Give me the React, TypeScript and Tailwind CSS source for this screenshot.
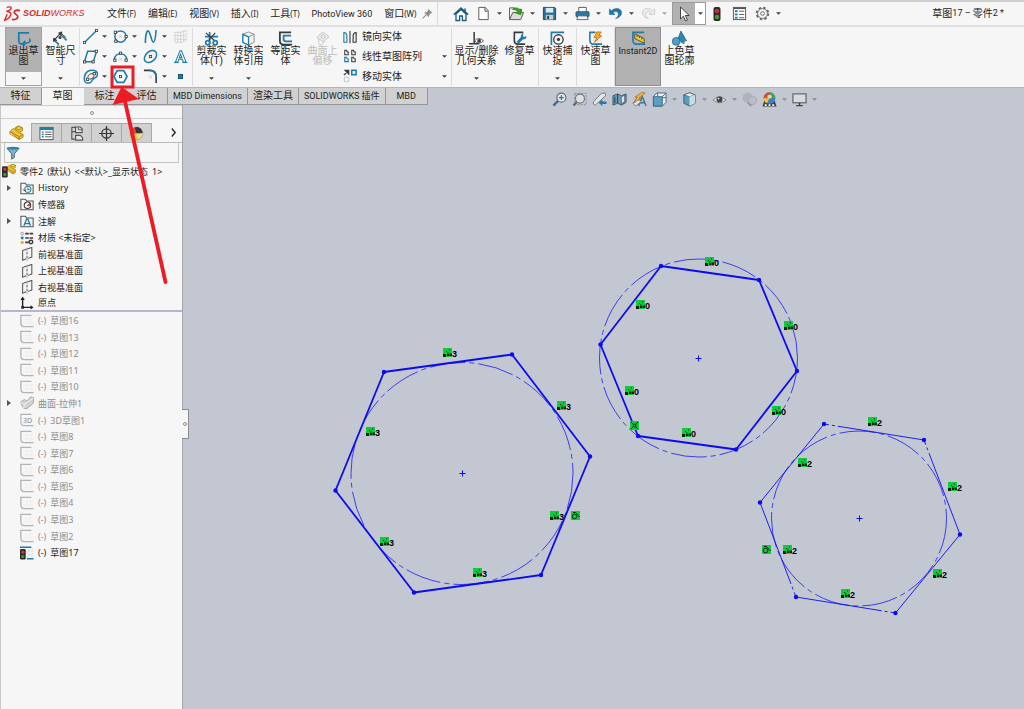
import { Fragment, type ReactNode } from "react";
import clsx from "clsx";

const BLUE = "#1f7ca8";
const DARK = "#3a3a3a";

function Icon({ children, className = "size-4" }: { children: ReactNode; className?: string }) {
  return (
    <svg viewBox="0 0 16 16" fill="none" aria-hidden="true" className={clsx("shrink-0", className)}>
      {children}
    </svg>
  );
}

function Caret({ className = "text-neutral-700" }: { className?: string }) {
  return (
    <svg viewBox="0 0 6 3" aria-hidden="true" className={clsx("h-[3px] w-[5px] shrink-0", className)}>
      <path d="M0 0h6L3 3z" fill="currentColor" />
    </svg>
  );
}

// small square handle used on sketch entity icons
function Node({ x, y }: { x: number; y: number }) {
  return <rect x={x - 1.2} y={y - 1.2} width="2.4" height="2.4" fill="#fff" stroke={DARK} strokeWidth="0.9" />;
}

const partShape = (
  <g stroke="#9a7408" strokeWidth="0.8" strokeLinejoin="round">
    <path d="M1 7 4.5 3.5 7 5V2.5L10 1l4.5 2v3L11 8l4 2v3l-4 2.5z" fill="#f3c12c" />
    <path d="m1 7 10 5.5 4-2.5M11 12.5v3M7 5l4 3M1 7v2.5l10 6" />
    <ellipse cx="10.5" cy="3.3" rx="2.6" ry="1.5" fill="#fbe07c" />
  </g>
);

const quickIcons = {
  home: (
    <>
      <path d="M3 8v6.5h3.6V10h2.8v4.5H13V8L8 3.5z" fill="#fff" stroke="#1c5b7c" strokeWidth="1.3" />
      <path d="M1 8.7 8 2.2l7 6.5" stroke="#1c5b7c" strokeWidth="1.8" />
      <path d="M12 2.5v3" stroke="#1c5b7c" strokeWidth="1.5" />
    </>
  ),
  file: (
    <>
      <path d="M3 1.5h7L13 5v9.5H3z" fill="#fff" stroke="#555" />
      <path d="M9.5 1.5v4H13" fill="#ddd" stroke="#555" />
    </>
  ),
  open: (
    <>
      <path d="M.5 14.5V2h5L7 3.5h6v4" fill="#efefef" stroke="#555" />
      <path d="M.7 14.5 4 7h11.5l-3 7.5z" fill="#ddd" stroke="#555" />
      <path d="M4 3c3-2 6-1.5 7.5 1.5l2-1-1 6L7 7.5l2-1.3C8 4.5 6.5 3.5 4 4z" fill="#35a51c" stroke="#20740f" strokeWidth="0.5" />
    </>
  ),
  save: (
    <>
      <path d="M1.5 1.5h12l1 1v12h-13z" fill="#2c6f92" stroke="#184a66" />
      <rect x="4" y="2" width="8" height="5" fill="#dbe9f0" />
      <rect x="4" y="9.5" width="8" height="5" fill="#c8ccd0" />
      <rect x="5.5" y="10.5" width="2" height="3.5" fill="#184a66" />
    </>
  ),
  print: (
    <>
      <path d="M4 6V1.5h8V6" fill="#fff" stroke="#555" />
      <rect x="1" y="6" width="14" height="5.5" rx="1" fill="#2c789f" stroke="#184a66" strokeWidth="0.8" />
      <path d="M3 10.5h10l1 4H2z" fill="#f2f2f2" stroke="#444" strokeWidth="0.8" />
    </>
  ),
  undo: (
    <path d="M1.5 3v6h6L5.3 7C8 5 11.5 6 11 9.5c-.3 1.8-1.5 2.8-3 4 4-1 6.5-3.2 6.5-6.5C14.3 2.5 8 1 3.6 5z" fill="#1f77a3" stroke="#155676" strokeWidth="0.5" />
  ),
  redo: (
    <path d="M14.5 3v6h-6l2.2-2C8 5 4.5 6 5 9.5c.3 1.8 1.5 2.8 3 4-4-1-6.5-3.2-6.5-6.5C1.7 2.5 8 1 12.4 5z" fill="#ececec" stroke="#c3c3c3" strokeWidth="0.8" />
  ),
  options: (
    <>
      <rect x="1.5" y="1.5" width="13" height="13" fill="#fff" stroke="#555" />
      <path d="M1.5 2.5h13" stroke="#555" strokeWidth="1.5" />
      {[4.5, 8, 11.5].map((y) => (
        <Fragment key={y}>
          <rect x="3" y={y} width="3" height="2" fill={BLUE} />
          <path d={`M7.5 ${y + 1}H13`} stroke="#555" />
        </Fragment>
      ))}
    </>
  ),
  gear: (
    <>
      <circle cx="8" cy="8" r="6.2" stroke="#666" strokeWidth="2" strokeDasharray="2.6 2.27" />
      <circle cx="8" cy="8" r="5.2" fill="#f6f6f6" stroke="#666" />
      <circle cx="8" cy="8" r="2" stroke="#666" />
    </>
  ),
};

const quickTools = [
  { label: "新建", icon: quickIcons.file },
  { label: "打开", icon: quickIcons.open },
  { label: "保存", icon: quickIcons.save },
  { label: "打印", icon: quickIcons.print },
  { label: "撤消", icon: quickIcons.undo },
  { label: "重做", icon: quickIcons.redo, disabled: true },
];

const menus = [
  ["文件", "(F)"],
  ["编辑", "(E)"],
  ["视图", "(V)"],
  ["插入", "(I)"],
  ["工具", "(T)"],
  ["", "PhotoView 360"],
  ["窗口", "(W)"],
];

function IconButton({ label, children, className }: { label: string; children: ReactNode; className?: string }) {
  return (
    <button type="button" aria-label={label} className={clsx("flex items-center justify-center", className)}>
      {children}
    </button>
  );
}

function MenuBar() {
  return (
    <header className="flex h-[27px] items-stretch border-t-2 border-b-2 border-t-[#cfcfcf] border-b-[#e0e0e0]">
      <div className="flex w-[438px] shrink-0 items-center border-r border-[#dadada] pl-1">
        <svg viewBox="0 0 16 16" className="size-[17px] shrink-0" fill="none" stroke="#da2c2c" strokeWidth="1.3" aria-hidden="true">
          <path d="M2.5 2.2c2.5-.8 4.8-.6 4.2 1C6.2 4.5 4 5.5 2 6" />
          <path d="M3 6.4c2.6 0 4 .8 3.2 3C5.3 12 3 13.6.6 14.4L3 8.6" />
          <path d="M15 5.2c-2.2-.6-5.5-.2-5.3 1.8.1 1.6 3.7 2.3 3.3 4.3-.4 2-3.2 2.7-5.6 2.3" strokeWidth="1.7" />
        </svg>
        <div className="ml-0.5 w-[84px] shrink-0 font-['Liberation_Sans',sans-serif] text-[9px] whitespace-nowrap text-[#da2c2c] italic">
          <b>SOLID</b>
          WORKS
        </div>
        <nav className="flex gap-3 text-[10px] whitespace-nowrap">
          {menus.map(([name, key]) => (
            <button key={key} type="button">
              {name}
              <span className={clsx(name ? "font-['Noto_Sans',sans-serif] text-[8px]" : "text-[9px]")}>{key}</span>
            </button>
          ))}
        </nav>
        <IconButton label="固定菜单" className="mr-1 ml-auto">
          <Icon className="size-[11px]">
            <path d="m9 1 6 6-2 .5-2.5 2.5-.5 3.5L3 6.5 6.5 6 9 3.5z" fill="#8c8c8c" />
            <path d="m1 15 5-5" stroke="#8c8c8c" strokeWidth="1.5" />
          </Icon>
        </IconButton>
      </div>
      <div className="ml-3 flex items-stretch">
        <IconButton label="主页" className="w-[22px]">
          <Icon>{quickIcons.home}</Icon>
        </IconButton>
        {quickTools.map((tool) => (
          <button key={tool.label} type="button" aria-label={tool.label} disabled={tool.disabled} className="flex items-center">
            <span className="flex w-[22px] justify-center">
              <Icon className="size-[15px]">{tool.icon}</Icon>
            </span>
            <span className="flex w-[11px] justify-center">
              <Caret className={tool.disabled ? "text-neutral-400" : "text-neutral-700"} />
            </span>
          </button>
        ))}
        <button type="button" aria-label="选择" className="ml-0.5 flex border border-[#9b9b9b]">
          <span className="flex w-[22px] items-center justify-center self-stretch bg-[#b1b1b1]">
            <Icon>
              <path d="M4.5 1v12l2.9-2.8 2.1 4.7 1.9-.9-2.1-4.5h3.900z" fill="#fff" stroke="#333" strokeWidth="0.9" />
            </Icon>
          </span>
          <span className="flex w-[10px] items-center justify-center self-stretch bg-white">
            <Caret />
          </span>
        </button>
        <IconButton label="重建模型" className="w-[22px]">
          <Icon>
            <rect x="4.5" y="1" width="7" height="14" rx="2" fill="#2b2b2b" />
            <circle cx="8" cy="5" r="2.3" fill="#c8312c" />
            <circle cx="8" cy="11" r="2.3" fill="#3f9c35" />
          </Icon>
        </IconButton>
        <IconButton label="文件属性" className="w-[22px]">
          <Icon className="size-[15px]">{quickIcons.options}</Icon>
        </IconButton>
        <IconButton label="选项" className="w-[35px] gap-1.5">
          <Icon className="size-[15px]">{quickIcons.gear}</Icon>
          <Caret />
        </IconButton>
      </div>
      <h1 className="ml-auto flex items-center pr-5 text-[10px]">
        草图<span className="text-[9px] whitespace-pre">17 – </span>零件<span className="text-[9px] whitespace-pre">2 *</span>
      </h1>
    </header>
  );
}

const ribbonIcons = {
  exit: (
    <>
      <path d="M14 2H3v8q0 4 4 4h2" stroke={BLUE} strokeWidth="1.8" />
      <path d="M14 7v3q0 2-4 2V9.5L6 13l4 3v-2.5q6 0 6-4z" fill={BLUE} />
    </>
  ),
  dimension: (
    <>
      <path d="m1.5 9.5 6.5-7" stroke={DARK} strokeWidth="1.3" />
      <path d="m0 11 1-3.5 3 2.5zM9.5 1 6 2l2.5 3zM8 2l6 5" fill={DARK} stroke={DARK} />
      <path d="m2 10.5 4.5 4M8.5 4l6 6" stroke={BLUE} strokeWidth="1.8" />
      <circle cx="7.5" cy="7" r="1.6" fill={DARK} />
    </>
  ),
  trim: (
    <>
      <path d="M6 1v13M1 6h14" stroke={BLUE} strokeWidth="1.8" />
      <path d="m2 2 10 9M12 2 5 10" stroke={DARK} strokeWidth="1.3" />
      <circle cx="4" cy="12.5" r="2.2" stroke={BLUE} strokeWidth="1.8" />
      <circle cx="12" cy="12.5" r="2.2" stroke={BLUE} strokeWidth="1.8" />
    </>
  ),
  convert: (
    <>
      <path d="m8 1 6 2.5V12l-6 3-6-3V3.5z" fill="#f3f3f3" stroke="#8b8b8b" />
      <path d="m2 3.5 6 2.8 6-2.8" stroke="#8b8b8b" />
      <path d="M8 6.3V15l-6-3V3.5z" fill="#fff" stroke={BLUE} strokeWidth="1.4" />
    </>
  ),
  offset: (
    <>
      <path d="M14 1.5H2V10q0 4.5 4 4.5h9" stroke={DARK} strokeWidth="1.9" />
      <path d="M14 5H6v3.5Q6 11 8.5 11H15" stroke={BLUE} strokeWidth="1.9" />
    </>
  ),
  surface: (
    <>
      <path d="m8 1 7 5-6 5.5L2 7z" fill="#ededed" stroke="#c4c4c4" />
      <path d="M4 8v5q0 2 3 2l3-4" stroke="#c4c4c4" />
      <circle cx="8.5" cy="6" r="2" stroke="#c4c4c4" />
    </>
  ),
  relations: (
    <>
      <path d="M5.5 1v12M0 13.5h11" stroke={DARK} strokeWidth="1.6" />
      <path d="M6 10.5q4-5 9.5 0-5 5-9.5 0z" fill="#fff" stroke="#555" />
      <circle cx="10.8" cy="10.5" r="2" fill={DARK} />
    </>
  ),
  repair: (
    <>
      <path d="M12 1.5H2.5v9Q2.5 14 6 14h8" stroke={DARK} strokeWidth="1.7" />
      <path d="m5 11.500 4.500-5Q9 3 12.500 2.500l-1 2.500L13 6.500l2.500-1Q15.500 9 11.500 9L7 13.500z" fill={BLUE} />
    </>
  ),
  snap: (
    <>
      <path d="M1.5 15V1.5H15" stroke={BLUE} strokeWidth="1.8" />
      <circle cx="9" cy="9" r="5" stroke={DARK} strokeWidth="1.4" />
      <circle cx="9" cy="9" r="1.7" fill={DARK} />
    </>
  ),
  rapid: (
    <>
      <path d="M5 6h9M5 10h9M6 4v9M10 6v7M14 6v8" stroke="#ddd" strokeWidth="0.8" />
      <path d="M8 1.5H2v8Q2 14 6 14h9" stroke={BLUE} strokeWidth="1.7" />
      <path d="m9.5 1-3 6h3L7 12l7.500-7h-3L14 1z" fill="#f8b21f" stroke="#c05b10" strokeWidth="0.8" />
    </>
  ),
  instant: (
    <>
      <path d="M14 1.5H2v8Q2 14 6 14h9" stroke={BLUE} strokeWidth="1.7" />
      <path d="m4 3 10 5v5L4 8z" fill="#f3cc31" stroke="#333" strokeWidth="0.8" />
      <path d="M6.500 4.500v2M9 5.500v2M11.500 7v2" stroke="#333" strokeWidth="0.9" />
    </>
  ),
  shaded: (
    <>
      <path d="m9.5 0 6 10.500h-10z" fill="#2b86b2" stroke="#17587a" strokeWidth="0.7" />
      <circle cx="4.5" cy="11" r="4.2" fill="#4d9fc5" stroke="#17587a" strokeWidth="0.7" />
      <path d="m10 7 4 2-1 5-4-2z" fill="#3585aa" />
    </>
  ),
};

function RibbonButton({ icon, label, caret, wide, disabled }: { icon: ReactNode; label: string; caret?: boolean; wide?: boolean; disabled?: boolean }) {
  return (
    <button
      type="button"
      disabled={disabled}
      className={clsx("flex h-[58px] flex-col items-center pt-1", wide ? "w-[49px]" : "w-[37px]", disabled && "text-[#bdbdbd]")}
    >
      <Icon className="size-[15px]">{icon}</Icon>
      <span className={clsx("text-[10px] leading-[10px]", wide ? "w-[46px]" : "w-8")}>{label}</span>
      {caret && (
        <span className="mt-auto flex h-[14px] items-center">
          <Caret />
        </span>
      )}
    </button>
  );
}

const entityTools: { label: string; caret?: boolean; icon: ReactNode }[] = [
  { label: "直线", caret: true, icon: <><path d="m1.5 14.5 13-13" stroke={BLUE} strokeWidth="1.6" /><Node x={1.5} y={14.5} /><Node x={14.5} y={1.5} /></> },
  { label: "圆", caret: true, icon: <><circle cx="8" cy="8" r="6" stroke={BLUE} strokeWidth="1.6" /><Node x={2.5} y={3.5} /><Node x={14} y={8} /><Node x={3} y={13} /><path d="m6.5 6.5 3 3m0-3-3 3" stroke="#bbb" strokeWidth="0.8" /></> },
  { label: "样条曲线", caret: true, icon: <path d="M2.5 15c0-7 1-13 3-13s3.500 12 5.500 12 2.500-6 3-13" stroke={BLUE} strokeWidth="1.7" /> },
  { label: "基准面", icon: <path d="M2 3.5h6v11H2zM8 3.5l6-2v11l-6 2M2 7h12M2 11h12M5 3v11M11 2v11" stroke="#c9c9c9" strokeDasharray="2 1" /> },
  { label: "平行四边形", caret: true, icon: <><path d="M5 2.5h9.500l-3.500 11H1.500z" stroke={BLUE} strokeWidth="1.6" /><Node x={1.7} y={13.7} /><Node x={14.2} y={2.5} /><Node x={10.8} y={13.7} /></> },
  { label: "圆弧", caret: true, icon: <><path d="M1.5 11C2 3 14 3 14.5 11" stroke={BLUE} strokeWidth="1.6" /><Node x={2} y={12} /><Node x={14} y={12} /><Node x={8} y={4.5} /><path d="m6.5 9.500 3 3m0-3-3 3" stroke="#bbb" strokeWidth="0.8" /></> },
  { label: "椭圆", caret: true, icon: <><ellipse cx="8" cy="8" rx="7.5" ry="5.2" transform="rotate(-42 8 8)" stroke={BLUE} strokeWidth="1.6" /><Node x={8} y={8} /></> },
  { label: "文字", icon: <><path d="m2.500 14 5-12H9l5 12h-3l-1.200-3.200H6.200L5 14zM6.800 9h2.600L8 5.500z" fill="#fff" stroke={BLUE} strokeWidth="1.1" /><path d="M1 14.500h5m4 0h5.500" stroke={BLUE} /></> },
  { label: "槽口", caret: true, icon: <><path d="M1.5 9C2 3 7 .5 12 1.5s4 7 .5 8-2 5-6 5.500S1 13 1.500 9z" stroke={BLUE} strokeWidth="1.6" /><Node x={5} y={11} /><Node x={12} y={5} /><path d="M5 9q1-4.500 5.500-4M7 11q4 0 5-4" stroke={DARK} /></> },
  { label: "多边形", icon: <><path d="M4.5 1.8h7L15 8l-3.500 6.200h-7L1 8z" fill="#fff" stroke={BLUE} strokeWidth="1.8" /><Node x={8} y={8} /></> },
  { label: "绘制圆角", caret: true, icon: <><path d="M1 1.5h6q7 0 7 7V15" stroke={DARK} strokeWidth="1.7" /><path d="M7 1.5q7 0 7 7" stroke={BLUE} strokeWidth="1.7" /><path d="m6.500 7 3 3m0-3-3 3" stroke="#bbb" strokeWidth="0.8" /></> },
  { label: "点", icon: <rect x="5.8" y="5.8" width="4.4" height="4.4" fill={BLUE} stroke="#174f6c" /> },
];

const transforms = [
  {
    label: "镜向实体",
    icon: (
      <>
        <path d="M1 3v11h3.500V9.500q-1-1 0-2Q4.500 3 1 3z" stroke={BLUE} strokeWidth="1.3" />
        <path d="M15 3v11h-3.500V9.500q1-1 0-2Q11.500 3 15 3z" stroke={DARK} strokeWidth="1.3" />
        <path d="M8 1v14" stroke={DARK} strokeWidth="1.3" />
      </>
    ),
  },
  {
    label: "线性草图阵列",
    caret: true,
    icon: (
      <>
        <path d="M2 1.5h2q0 2 2 2v3H2zM10 1.5h2q0 2 2 2v3h-4zM10 9.500h2q0 2 2 2v3h-4z" stroke={DARK} strokeWidth="1.2" />
        <path d="M2 9.500h2q0 2 2 2v3H2z" stroke={BLUE} strokeWidth="1.3" />
      </>
    ),
  },
  {
    label: "移动实体",
    caret: true,
    icon: (
      <>
        <path d="m1 7 4-4M2.5 1.5h4v4z" stroke={DARK} strokeWidth="1.5" fill={DARK} />
        <rect x="10" y="1.5" width="5" height="5" stroke={BLUE} strokeWidth="1.8" />
        <rect x="1.5" y="9.5" width="5" height="5" stroke="#aaa" strokeDasharray="1.5 1" />
      </>
    ),
  },
];

function Separator() {
  return <div className="my-px w-px shrink-0 self-stretch bg-[#dcdcdc]" />;
}

function Ribbon() {
  return (
    <div className="flex h-[61px] items-start border-b border-[#b5b5b5] pl-[5px]">
      <button type="button" aria-pressed="true" className="flex h-[59px] w-[37px] flex-col items-center border border-[#a3a3a3] bg-[#f6f6f6] text-[10px] leading-[10px]">
        <span className="flex w-full flex-1 flex-col items-center bg-[#b1b1b1] pt-[3px]">
          <Icon className="size-[15px]">{ribbonIcons.exit}</Icon>
          <span className="w-8">退出草图</span>
        </span>
        <span className="flex h-[13px] items-center">
          <Caret />
        </span>
      </button>
      <RibbonButton icon={ribbonIcons.dimension} label="智能尺寸" caret />
      <Separator />
      <div className="grid h-[59px] w-[112px] shrink-0 grid-cols-[30px_30px_30px_22px] grid-rows-3">
        {entityTools.map((tool) => (
          <button key={tool.label} type="button" aria-label={tool.label} className="flex items-center gap-1 pl-[3px]">
            <Icon className="size-[15px]">{tool.icon}</Icon>
            {tool.caret && <Caret />}
          </button>
        ))}
      </div>
      <Separator />
      <RibbonButton icon={ribbonIcons.trim} label="剪裁实体(T)" caret />
      <RibbonButton icon={ribbonIcons.convert} label="转换实体引用" caret />
      <RibbonButton icon={ribbonIcons.offset} label="等距实体" />
      <RibbonButton icon={ribbonIcons.surface} label="曲面上偏移" disabled />
      <div className="grid h-[59px] w-[110px] shrink-0 grid-rows-3 text-[10px]">
        {transforms.map((tool) => (
          <button key={tool.label} type="button" className="flex items-center gap-[5px] pl-0.5 whitespace-nowrap">
            <Icon className="size-[14px]">{tool.icon}</Icon>
            {tool.label}
            {tool.caret && (
              <span className="mr-1 ml-auto">
                <Caret />
              </span>
            )}
          </button>
        ))}
      </div>
      <Separator />
      <RibbonButton icon={ribbonIcons.relations} label="显示/删除几何关系" caret wide />
      <RibbonButton icon={ribbonIcons.repair} label="修复草图" />
      <Separator />
      <RibbonButton icon={ribbonIcons.snap} label="快速捕捉" caret />
      <Separator />
      <RibbonButton icon={ribbonIcons.rapid} label="快速草图" />
      <Separator />
      <button type="button" aria-pressed="true" className="flex h-[59px] w-[46px] flex-col items-center border border-[#8f8f8f] bg-[#b1b1b1] pt-[3px] text-[9px] leading-[11px]">
        <Icon className="size-[15px]">{ribbonIcons.instant}</Icon>
        Instant2D
      </button>
      <RibbonButton icon={ribbonIcons.shaded} label="上色草图轮廓" />
    </div>
  );
}

const tabs = ["特征", "草图", "标注", "评估", "MBD Dimensions", "渲染工具", "SOLIDWORKS 插件", "MBD"];

const viewTools: { label: string; caret?: boolean; icon: ReactNode }[] = [
  { label: "整屏显示全图", icon: <><path d="m7.500 8.500-6 6" stroke="#3d6f8c" strokeWidth="2.6" /><circle cx="10" cy="6" r="4.8" fill="#dfe9ee" stroke="#666" strokeWidth="1.2" /><path d="M7.500 6h5M10 3.500v5" stroke={BLUE} strokeWidth="1.3" /></> },
  { label: "局部放大", icon: <><path d="M3 1.500h12v12H3z" stroke="#888" strokeDasharray="2 1.5" /><path d="m6 9.500-4.500 5" stroke="#666" strokeWidth="2.3" /><circle cx="8.500" cy="7" r="4.8" fill="#dbe2e7" stroke="#777" strokeWidth="1.2" /></> },
  { label: "上一视图", icon: <><path d="m14 1-4 .5-8.500 9q-1 3 2 3.500L14.500 4z" fill="#e3e6e8" stroke="#777" /><path d="m7 11.500 4-3.500v2.200h4.500v2.600H11V15z" fill={BLUE} /></> },
  { label: "剖面视图", icon: <><path d="m1 4 5-2 4 2 5-2v9l-5 3-4-2-5 2z" fill="#6a9db8" stroke="#3f5663" /><path d="M6 2v10M3 5v7" stroke="#31495a" strokeWidth="1.2" /><path d="m10 5 3.500-1.500v7l-3.500 2z" fill="#dbe5ea" stroke="#3f5663" strokeWidth="0.7" /></> },
  { label: "动态注解视图", icon: <><path d="m7 15 4-10 4 10M8.500 11.500h5" stroke="#3b7796" strokeWidth="1.5" /><path d="m1 12 4-5 5 3-6 5z" fill="#dce5ea" stroke="#5c6f7b" strokeWidth="0.8" /><path d="M11 0 3 5.500h3L1.500 12 10 6.500H7.500L14 1z" fill="#f6b13d" stroke="#9a6220" strokeWidth="0.7" /></> },
  { label: "视图定向", caret: true, icon: <><path d="M1.500 5 5 1h10v10l-4 4H1.500z" fill="#eaf1f5" stroke="#496778" /><path d="M11 5l4-4M6 1v4M15 6h-4" stroke="#496778" /><path d="M1.500 5H11v10H1.500z" fill="#5a9fc2" stroke="#3c6c85" /></> },
  { label: "显示样式", caret: true, icon: <><path d="m8 1 6 2v9l-6 3-6-3V3z" fill="#5a9fc2" stroke="#3c5b6c" /><path d="m2 3 6 2 6-2-6-2z" fill="#f0f5f8" stroke="#3c5b6c" strokeWidth="0.7" /><path d="m8 5 6-2v9l-6 3z" fill="#cbdbe4" /></> },
  { label: "隐藏所有类型", caret: true, icon: <><path d="M1 8.500q7-7 14 0-7 6-14 0z" fill="#d9dbe0" stroke="#888" /><circle cx="8" cy="8" r="3.2" fill="#444" /><circle cx="7" cy="7" r="1" fill="#ddd" /></> },
  { label: "编辑外观", icon: <><circle cx="6" cy="6" r="5.5" fill="#afb3bc" /><circle cx="11" cy="9" r="4.5" fill="#b9bdc6" stroke="#a3a8b1" /><path d="m6 11 4 4" stroke="#9398a3" strokeWidth="2" /></> },
  { label: "应用布景", caret: true, icon: <><path d="m2.500 9-2 6.500h15l-2-6.500z" fill="#3f434b" /><path d="M3 13h2v2H3zm4 0h2v2H7zm4 0h2v2h-2z" fill="#fff" /><circle cx="8" cy="6.500" r="6.300" fill="#3f7fc4" /><path d="M8 .2a6.300 6.300 0 0 0-6.300 6.300L8 7z" fill="#dd4634" /><path d="M8 .2a6.300 6.300 0 0 1 6.300 6.300L8 7z" fill="#42a84d" /><path d="M1.700 6.500q0 4 3.500 5.500L8 7z" fill="#f0c53a" /><ellipse cx="8" cy="5" rx="2.400" ry="2" fill="#fff" opacity=".7" /></> },
  { label: "视图设定", caret: true, icon: <><rect x="1" y="2" width="14" height="9.5" fill="#d7dade" stroke="#666" strokeWidth="1.3" /><path d="M8 11.500V14m-3.500.5h7" stroke="#444" strokeWidth="1.5" /></> },
];

function TabBar() {
  return (
    <div className="relative z-10 flex h-[17px] items-start">
      <div role="tablist" className="flex h-full">
        {tabs.map((tab) => {
          const active = tab === "草图";
          return (
            <button
              key={tab}
              type="button"
              role="tab"
              aria-selected={active}
              className={clsx(
                "flex min-w-[42px] items-center justify-center border-r border-b px-[5px] leading-none whitespace-nowrap",
                active ? "border-[#f6f6f6] bg-[#f6f6f6]" : "border-[#969696] bg-[#d1d1d1]",
                /[A-Z]/.test(tab) ? "text-[9px]" : "text-[10px]",
              )}
            >
              {tab}
            </button>
          );
        })}
      </div>
      <div className="ml-[122px] flex pt-1">
        {viewTools.map((tool) => (
          <button key={tool.label} type="button" aria-label={tool.label} className="flex items-center">
            <span className="flex w-5 justify-center">
              <Icon className="size-[15px]">{tool.icon}</Icon>
            </span>
            {tool.caret && (
              <span className="flex w-[10px] justify-center">
                <Caret className="text-[#868b96]" />
              </span>
            )}
          </button>
        ))}
      </div>
    </div>
  );
}

const folder = <path d="M1 14.500v-12h5l1.500 2H15v10z" fill="#f6f6f6" stroke="#555" strokeWidth="1.2" />;

const planeIcon = (
  <>
    <path d="M7 2.500 3 4v11l4-1.500M9 2l4.500-1.500v11L9 13" stroke="#555" strokeWidth="1.2" />
    <path d="M8 1v14.500" stroke="#555" strokeWidth="1.1" strokeDasharray="3 1.5" />
  </>
);

const sketchIcon = (
  <>
    <path d="M5 6h10M5 10h10M8 4v9M12 4v9" stroke="#ececec" strokeWidth="0.8" />
    <path d="M13 1.500H1V10q0 4.500 4 4.500h10.500" stroke="#b3b3b3" strokeWidth="1.5" />
  </>
);

type TreeRow = { prefix?: string; label: string; icon: ReactNode; arrow?: boolean; muted?: boolean; last?: boolean };

const sketchRow = (n: number): TreeRow => ({ prefix: "(-)", label: `草图${n}`, icon: sketchIcon, muted: true });

const treeRows: TreeRow[] = [
  {
    label: "History",
    arrow: true,
    icon: <>{folder}<circle cx="9" cy="9.5" r="3.5" fill="#fff" stroke={BLUE} strokeWidth="1.2" /><path d="M9 7.500V10h2M3.500 9.500l1.800 2L7 9.500" stroke={DARK} /></>,
  },
  { label: "传感器", icon: <>{folder}<circle cx="8.5" cy="9.5" r="3.7" fill="#fff" stroke={DARK} strokeWidth="1.2" /><path d="m8 10 3-3v3z" fill="#d33" stroke="#d33" /></> },
  { label: "注解", arrow: true, icon: <>{folder}<path d="m4.500 13.500 3-7.500H9l3 7.500M6 11h5" stroke={BLUE} strokeWidth="1.5" /></> },
  {
    label: "材质 <未指定>",
    icon: <><path d="M6 3h9M6 8h9M6 13h4" stroke={DARK} strokeWidth="1.8" strokeDasharray="4 1" /><circle cx="2.5" cy="3" r="1.5" fill="#fff" stroke="#888" /><circle cx="2.5" cy="8" r="1.7" fill={BLUE} /><circle cx="2.5" cy="13" r="1.9" fill="#e4b21e" /><circle cx="12.5" cy="12.5" r="2" fill="#fff" stroke={DARK} strokeWidth="1.7" /></>,
  },
  { label: "前视基准面", icon: planeIcon },
  { label: "上视基准面", icon: planeIcon },
  { label: "右视基准面", icon: planeIcon },
  { label: "原点", last: true, icon: <><path d="M3 2v11h11" stroke="#222" strokeWidth="1.6" /><path d="m.5 4.500 2.500-4 2.500 4zM12 10.500l3.500 2.500-3.500 2.500zM1.500 11.500h3v3h-3z" fill="#222" /></> },
  ...[16, 13, 12, 11, 10].map(sketchRow),
  {
    label: "曲面-拉伸1",
    arrow: true,
    muted: true,
    icon: <><path d="M.5 7 5 4l3 2 4-5 3.500 1v6L8 14.500 4 14z" fill="#cfcfcf" stroke="#a5a5a5" /><path d="M.5 7 5 9.500q0 3-1 4.500M5 9.500l10-7" stroke="#f1f1f1" strokeWidth="1.2" /></>,
  },
  {
    prefix: "(-)",
    label: "3D草图1",
    muted: true,
    icon: <><path d="M13 1.500H1V10q0 4.500 4 4.500h10.500" stroke="#b3b3b3" strokeWidth="1.3" /><text x="3.5" y="11" fontSize="8" fill="#888">3D</text></>,
  },
  ...[8, 7, 6, 5, 4, 3, 2].map(sketchRow),
  {
    prefix: "(-)",
    label: "草图17",
    icon: <><path d="M8 6h7M8 10h7M10 3v10M14 3v10" stroke="#ddd" strokeWidth="0.8" /><path d="M0 1.500h13M8 14.500h7.500" stroke={BLUE} strokeWidth="1.7" /><rect x="0" y="3.5" width="6.5" height="12" rx="1.5" fill="#2b2b2b" /><circle cx="3.2" cy="7" r="1.8" fill="#d4332c" /><circle cx="3.2" cy="12" r="1.8" fill="#3f9c35" /></>,
  },
];

const managerTabs = [
  { label: "特征管理器", icon: partShape },
  { label: "属性管理器", icon: <><rect x="1" y="1.5" width="14" height="13" fill="#fff" stroke="#555" /><path d="M1 3h14" stroke={BLUE} strokeWidth="2.5" /><path d="M3 6.500h2M3 9h2M3 11.500h2" stroke={BLUE} strokeWidth="1.5" /><path d="M6.500 6.500h7M6.500 9h7M6.500 11.500h7" stroke="#555" /></> },
  { label: "配置管理器", icon: <><path d="M3 1v13h3.500M3 6h3.500M3 1.500h4" stroke="#555" strokeWidth="1.2" /><path d="M7 1h5l2 2v4H7zM7 10h5l2.500 2.500V15H7z" fill="#e6e6e6" stroke="#555" strokeWidth="1.2" /><path d="M10 1v3h4" stroke="#555" /></> },
  { label: "尺寸管理器", icon: <><circle cx="8" cy="8" r="5" stroke="#333" strokeWidth="1.3" /><path d="M8 0v16M0 8h16" stroke="#333" strokeWidth="1.3" /></> },
  { label: "外观管理器", icon: <><circle cx="8" cy="8" r="6.8" fill="#f0c53a" stroke="#888" strokeWidth="0.6" /><path d="M8 8 6 1.500A6.800 6.800 0 0 0 1.200 8z" fill="#d9453a" /><path d="m8 8-2-6.500a6.800 6.800 0 0 1 8.800 6z" fill="#33343a" /><path d="M8 8q4 1 6.800-.5Q14 12 10 14.500z" fill="#ecd9a0" /></> },
];

function FeatureTree() {
  return (
    <aside className="relative w-[183px] shrink-0 border-r border-l border-r-[#a5a5a5] border-l-[#c8c8c8] bg-[#f6f6f6]">
      <div className="flex h-[14px] items-center justify-center border-t border-b border-[#cfcfcf] pt-0.5">
        <span className="size-1 rounded-full border border-[#8e8e8e]" />
      </div>
      <div className="mt-1 flex h-5 items-stretch border-b border-[#b9b9b9] pl-px">
        {managerTabs.map((tab, i) => (
          <button
            key={tab.label}
            type="button"
            aria-label={tab.label}
            className={clsx("flex w-[30px] items-center justify-center border-r border-[#a8a8a8]", i > 0 && "border-t bg-[#d1d1d1]")}
          >
            <Icon className="size-[15px]">{tab.icon}</Icon>
          </button>
        ))}
        <IconButton label="更多" className="mr-1 ml-auto">
          <Icon className="size-[9px]">
            <path d="m5 1 6 7-6 7" stroke="#222" strokeWidth="2.4" />
          </Icon>
        </IconButton>
      </div>
      <label className="mx-[3px] flex h-5 items-center border border-t-0 border-[#c4c4c4] pl-px">
        <Icon className="size-[14px]">
          <path d="M1 2.500 6.500 9v6l3-2V9L15 2.500z" fill="#7fb3cd" stroke="#3d5b6b" />
          <ellipse cx="8" cy="2.5" rx="7" ry="1.6" fill="#2f7fa6" />
        </Icon>
        <input type="text" aria-label="过滤器" className="min-w-0 flex-1 bg-transparent text-[9px] outline-none" />
      </label>
      <ul className="grid min-h-[398px] auto-rows-fr font-['Noto_Sans','Noto_Sans_CJK_SC',sans-serif] text-[9px] leading-none whitespace-nowrap text-[#1d1d1d]">
        <li className="flex items-center gap-1 pl-px">
          <Icon className="size-[14px]">
            <g transform="translate(4 -1) scale(.8)">{partShape}</g>
            <rect x="0" y="2.5" width="6.5" height="13" rx="1.5" fill="#2b2b2b" />
            <circle cx="3.2" cy="6" r="1.9" fill="#d4332c" />
            <circle cx="3.2" cy="12" r="1.9" fill="#3f9c35" />
          </Icon>
          <span>零件2</span>
          <span>(默认)</span>
          <span>&lt;&lt;默认&gt;_显示状态</span>
          <span>1&gt;</span>
        </li>
        {treeRows.map((row) => (
          <li
            key={row.label}
            className={clsx("flex items-center", row.muted && "text-[#8d8d8d]", row.last && "border-b-2 border-[#b6b6d4]")}
          >
            <span className="flex w-[19px] pl-1.5">
              {row.arrow && (
                <svg viewBox="0 0 4 6" className="h-1.5 w-1" aria-hidden="true">
                  <path d="M0 0v6l4-3z" fill="#555" />
                </svg>
              )}
            </span>
            <Icon className="size-[14px]">{row.icon}</Icon>
            <span className="ml-1 flex gap-1">
              {row.prefix && <span>{row.prefix}</span>}
              <span>{row.label}</span>
            </span>
          </li>
        ))}
      </ul>
      <button
        type="button"
        aria-label="折叠面板"
        className="absolute top-[304px] -right-[7px] z-10 flex h-[30px] w-[7px] items-center justify-center border border-l-0 border-[#8e8e8e] bg-[#f6f6f6]"
      >
        <span className="size-1 rounded-full border border-[#8e8e8e]" />
      </button>
    </aside>
  );
}

type Point = [number, number];
type Polygon = {
  name: string;
  center: Point;
  radius: number;
  points: Point[];
  construction?: boolean;
  badges: Point[];
  tangent?: Point;
  coincident?: Point;
};

const polygons: Polygon[] = [
  {
    name: "3",
    center: [462, 473.5],
    radius: 111,
    points: [[512, 354.5], [384, 372], [335.5, 490.5], [414, 592.5], [541, 575], [590, 456.5]],
    badges: [[443, 348], [557, 401], [366, 427], [550, 511], [380, 537], [473, 568]],
    tangent: [571, 511],
  },
  {
    name: "0",
    center: [698.5, 358],
    radius: 99,
    points: [[661, 266], [759, 280], [797, 371], [736, 449.5], [638, 436], [600.5, 344.5]],
    badges: [[705, 257], [636, 300], [784, 321], [625, 386], [682, 428], [772, 406]],
    coincident: [630, 421],
  },
  {
    name: "2",
    center: [859, 518.5],
    radius: 87.5,
    construction: true,
    points: [[824, 424], [924, 440], [960, 534.5], [895.5, 613], [796, 597], [760, 502.5]],
    badges: [[868, 417], [798, 458], [948, 482], [783, 545], [933, 569], [841, 589]],
    tangent: [762, 545],
  },
];

function Badge({ at: [x, y], children }: { at: Point; children: ReactNode }) {
  return (
    <g transform={`translate(${x} ${y})`}>
      <rect width="9" height="9" fill="#0ccb3c" />
      {children}
    </g>
  );
}

function SketchCanvas() {
  return (
    <svg viewBox="183 105 841 604" className="block w-full" role="img" aria-label="草图17">
      {polygons.map((p) => {
        const [cx, cy] = p.center;
        return (
          <g key={p.name} stroke="#0b0bf2" fill="none">
            <circle cx={cx} cy={cy} r={p.radius} stroke="#2c2cf0" strokeWidth="0.9" strokeDasharray="36 4 5 4" />
            {p.points.map(([x, y], i) => {
              const [nx, ny] = p.points[(i + 1) % p.points.length];
              return (
                <line
                  key={i}
                  x1={x}
                  y1={y}
                  x2={nx}
                  y2={ny}
                  strokeWidth={p.construction ? 0.9 : 1.8}
                  strokeDasharray={p.construction && i % 3 !== 2 ? "5 3 3 3 200" : undefined}
                />
              );
            })}
            {p.points.map(([x, y]) => (
              <circle key={x} cx={x} cy={y} r="2.2" fill="#0b0bf2" stroke="none" />
            ))}
            <path d={`M${Math.floor(cx) - 2.5} ${Math.floor(cy) + 0.5}h6m-3-3v6`} />
          </g>
        );
      })}
      {polygons.map((p) => (
        <g key={p.name}>
          {p.badges.map((at) => (
            <Badge key={at.join()} at={at}>
              <path d="M0 6h3v3H0zM4 6h2v2H4zM6.500 5.500H9V8H6.500zM3 3h1v1H3zM6 1.500h1v1H6zM4 4.500h1.500v1H4z" fill="#0a2410" />
              <text x="9" y="9" fontSize="9" fontWeight="700" fontFamily="Liberation Sans, sans-serif">
                {p.name}
              </text>
            </Badge>
          ))}
          {p.tangent && (
            <Badge at={p.tangent}>
              <circle cx="3.5" cy="5.5" r="2.3" fill="none" stroke="#0a2410" />
              <path d="M2 1.500h2.500l4 4.500" fill="none" stroke="#0a2410" />
            </Badge>
          )}
          {p.coincident && (
            <Badge at={p.coincident}>
              <path d="m1 1 2.500 2.500M8 1 5.500 3.500M1 8l2-2M8 8 6 6" stroke="#0a2410" />
              <rect x="3.2" y="3.2" width="2.6" height="2.6" fill="none" stroke="#0a2410" strokeWidth="0.8" />
            </Badge>
          )}
        </g>
      ))}
    </svg>
  );
}

// red box round the polygon tool, with an arrow pointing at it
function Callout() {
  return (
    <svg viewBox="105 60 70 230" className="pointer-events-none absolute top-[60px] left-[105px] z-20 h-[230px] w-[70px]" fill="none" aria-hidden="true">
      <rect x="112" y="67" width="21" height="20" stroke="#ed1c24" strokeWidth="3" />
      <path d="m124 97 41.500 185" stroke="#ed1c24" strokeWidth="3.8" strokeLinecap="round" />
      <path d="m121.500 87 17.500 12-26.500 6z" fill="#ed1c24" />
    </svg>
  );
}

export default function App() {
  return (
    <div className="relative flex min-h-screen flex-col overflow-hidden bg-[#c3c7d2] font-['Roboto','Noto_Sans_CJK_SC',sans-serif] text-[#1d1d1d]">
      <div className="bg-[#f6f6f6]">
        <MenuBar />
        <Ribbon />
      </div>
      <TabBar />
      <div className="flex flex-1 items-stretch">
        <FeatureTree />
        <main className="min-w-0 flex-1">
          <SketchCanvas />
        </main>
      </div>
      <Callout />
    </div>
  );
}
